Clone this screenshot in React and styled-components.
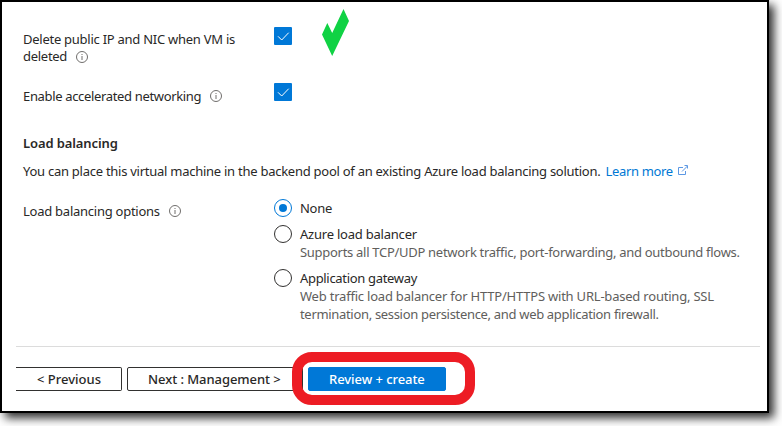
import React from "react";
import styled, { createGlobalStyle } from "styled-components";

const GlobalStyle = createGlobalStyle`
  * { box-sizing: border-box; }
  body { margin: 0; background: #fff; overflow: hidden; }
`;

const Page = styled.div`
  width: 782px;
  height: 426px;
  overflow: hidden;
  background: #fff;
  font: 13px/18px "Noto Sans", "Open Sans", sans-serif;
  color: #292827;
`;

const Frame = styled.main`
  width: 769px;
  height: 413px;
  border: 2px solid #000;
  background: #fff;
  box-shadow: 5px 5px 9px rgba(0, 0, 0, 0.82);
  display: flex;
  flex-direction: column;
`;

const Fields = styled.div`
  display: flex;
  flex-direction: column;
  padding-left: 21px;
  height: 342px;
`;

const FieldRow = styled.div`
  display: grid;
  grid-template-columns: 251px 1fr;
  align-items: start;
  height: ${(p) => p.$height}px;
`;

const Text = styled.span`
  white-space: nowrap;
  letter-spacing: ${(p) => p.$spacing || 0}px;
`;

const Label = styled.div`
  padding-top: ${(p) => p.$top || 0}px;
`;

const LabelLine = styled.div`
  display: flex;
  align-items: flex-start;
  gap: 9px;
  height: 17px;
  line-height: 17px;
`;

const Checks = styled.div`
  display: flex;
  align-items: flex-start;
  gap: 30px;
`;

const Checkbox = styled.span`
  display: flex;
  width: 18px;
  height: 18px;
  margin-top: ${(p) => p.$top || 0}px;
  border-radius: 1px;
  background: #0078d7;
`;

const Heading = styled.h2`
  margin: 0;
  height: 28px;
  font-size: 13px;
  line-height: 18px;
  font-weight: 600;
`;

const Paragraph = styled.p`
  display: flex;
  margin: 0;
  height: 36px;
`;

const Link = styled.a`
  display: flex;
  margin-left: 5px;
  color: #0078d4;
`;

const Options = styled.div`
  display: flex;
  flex-direction: column;
`;

const Option = styled.div`
  display: grid;
  grid-template-columns: 26px 1fr;
  height: ${(p) => p.$height}px;
`;

const Radio = styled.span`
  display: flex;
  align-items: center;
  justify-content: center;
  width: 18px;
  height: 18px;
  margin-top: 1px;
  border: 1px solid ${(p) => (p.$on ? "#0078d7" : "#323130")};
  border-radius: 50%;

  &::after {
    content: "";
    width: 8px;
    height: 8px;
    border-radius: 50%;
    background: ${(p) => (p.$on ? "#0078d7" : "transparent")};
  }
`;

const OptionText = styled.div`
  display: flex;
  flex-direction: column;
  padding-top: 1px;
`;

const Description = styled(Text)`
  color: #605e5c;
`;

const Footer = styled.footer`
  display: flex;
  flex-direction: column;
  gap: 20px;
  margin: 2px 7px 0 14px;
`;

const Divider = styled.hr`
  width: 100%;
  height: 1px;
  margin: 0;
  border: 0;
  background: #dcdcdc;
`;

const Buttons = styled.div`
  display: flex;
  gap: 5px;
`;

const Button = styled.button`
  position: relative;
  width: ${(p) => p.$width}px;
  height: 24px;
  padding: 0 0 0 ${(p) => p.$indent}px;
  border: 1px solid ${(p) => (p.$primary ? "#0078d7" : "#323130")};
  border-left-width: ${(p) => (p.$cut ? 0 : 1)}px;
  border-radius: ${(p) => (p.$cut ? "0 2px 2px 0" : "2px")};
  background: ${(p) => (p.$primary ? "#0078d7" : "#fff")};
  color: ${(p) => (p.$primary ? "#fff" : "#292827")};
  font: 500 13px/22px "Noto Sans", "Open Sans", sans-serif;
  text-align: left;
`;

const RedRing = styled.span`
  position: absolute;
  left: -17px;
  top: -16px;
  width: 183px;
  height: 53px;
  border: 10px solid #ed1c24;
  border-radius: 20px;
  pointer-events: none;
`;

const Svg = styled.svg`
  display: block;
  flex: none;
  margin-top: ${(p) => p.$top || 0}px;
  margin-left: ${(p) => p.$left || 0}px;
`;

const Info = ({ top = 2 }) => (
  <Svg $top={top} width="12" height="12" viewBox="0 0 12 12" fill="none" stroke="#706e6c">
    <circle cx="6" cy="6" r="5.5" />
    <path d="M6 5v4M6 3v1" />
  </Svg>
);

const Tick = () => (
  <Svg width="18" height="18" viewBox="0 0 18 18" fill="none" stroke="#fff">
    <path d="M4 9.3 7.7 13 14.7 5.7" />
  </Svg>
);

const GreenTick = () => (
  <Svg width="28" height="48" viewBox="0 0 28 48" $top={7} fill="#10d244">
    <path d="M0 25.5 5.3 14 10.2 24 21.5 0 27 12 10.2 47Z" />
  </Svg>
);

const External = () => (
  <Svg $top={3} $left={5} width="11" height="11" viewBox="0 0 11 11" fill="none" stroke="#5c98e4">
    <path d="M5 2.5H.5v7h7V6M4 6.5 9.5 1M6.5.5h3v3" />
  </Svg>
);

export default function App() {
  return (
    <Page>
      <GlobalStyle />
      <Frame>
        <Fields>
          <FieldRow $height={81}>
            <Label $top={29}>
              <LabelLine><Text $spacing={-0.26}>Delete public IP and NIC when VM is</Text></LabelLine>
              <LabelLine><Text $spacing={-0.28}>deleted</Text><Info top={3} /></LabelLine>
            </Label>
            <Checks>
              <Checkbox $top={25}><Tick /></Checkbox>
              <GreenTick />
            </Checks>
          </FieldRow>
          <FieldRow $height={51}>
            <Label $top={5}>
              <LabelLine><Text $spacing={-0.34}>Enable accelerated networking</Text><Info /></LabelLine>
            </Label>
            <Checkbox><Tick /></Checkbox>
          </FieldRow>
          <Heading><Text $spacing={-0.1}>Load balancing</Text></Heading>
          <Paragraph>
            <Text $spacing={-0.26}>You can place this virtual machine in the backend pool of an existing Azure load balancing solution.</Text>
            <Link><Text $spacing={-0.33}>Learn more</Text><External /></Link>
          </Paragraph>
          <FieldRow $height={142}>
            <Label $top={5}>
              <LabelLine><Text $spacing={-0.25}>Load balancing options</Text><Info /></LabelLine>
            </Label>
            <Options>
              <Option $height={26}>
                <Radio $on />
                <OptionText><Text $spacing={-0.3}>None</Text></OptionText>
              </Option>
              <Option $height={44}>
                <Radio />
                <OptionText>
                  <Text $spacing={-0.22}>Azure load balancer</Text>
                  <Description $spacing={-0.29}>Supports all TCP/UDP network traffic, port-forwarding, and outbound flows.</Description>
                </OptionText>
              </Option>
              <Option $height={55}>
                <Radio />
                <OptionText>
                  <Text $spacing={-0.32}>Application gateway</Text>
                  <Description $spacing={-0.21}>Web traffic load balancer for HTTP/HTTPS with URL-based routing, SSL</Description>
                  <Description $spacing={-0.32}>termination, session persistence, and web application firewall.</Description>
                </OptionText>
              </Option>
            </Options>
          </FieldRow>
        </Fields>
        <Footer>
          <Divider />
          <Buttons>
            <Button $width={106} $indent={21} $cut><Text>&lt; Previous</Text></Button>
            <Button $width={176} $indent={20}><Text $spacing={-0.06}>Next : Management &gt;</Text></Button>
            <Button $width={138} $indent={20} $primary>
              <Text $spacing={-0.06}>Review + create</Text>
              <RedRing />
            </Button>
          </Buttons>
        </Footer>
      </Frame>
    </Page>
  );
}
